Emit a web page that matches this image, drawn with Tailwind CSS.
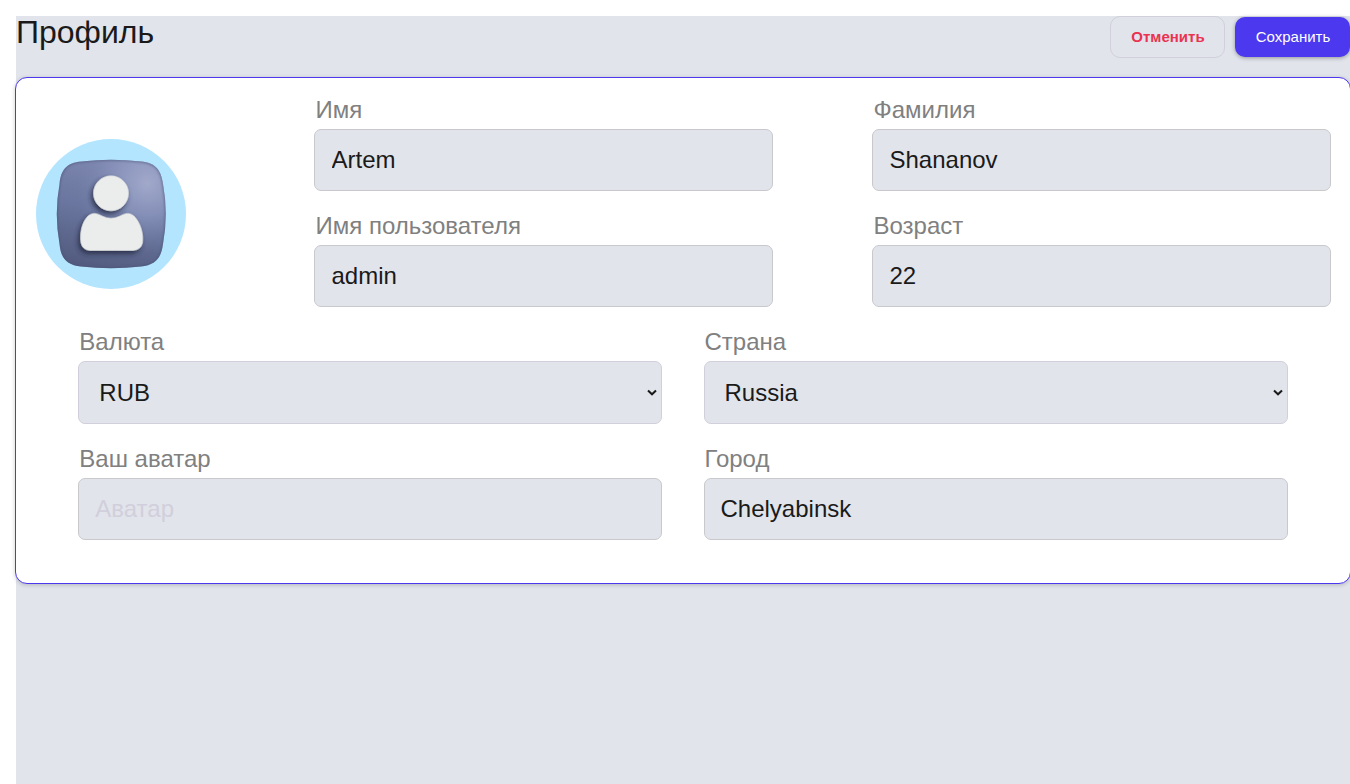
<!DOCTYPE html>
<html lang="ru">
<head>
<meta charset="utf-8">
<title>Профиль</title>
<script src="https://cdn.jsdelivr.net/npm/@tailwindcss/browser@4"></script>
</head>
<body class="h-screen overflow-hidden bg-white pt-4 pl-4 font-['Liberation_Sans',Arial,sans-serif] text-2xl text-[#1a1a1a]">
<main class="h-[768px] bg-[#e1e4eb]">
  <header class="flex h-[61px] items-start justify-between">
    <h1 class="text-[32px] leading-[32px]">Профиль</h1>
    <div class="flex items-center gap-[10px]">
      <button class="h-[42px] w-[115px] rounded-[10px] border border-[#d1cfdb] pl-px text-[15px] font-bold text-[#ea3350]">Отменить</button>
      <button class="h-10 w-[115px] rounded-[10px] bg-[#4b38ef] pl-px text-[15px] text-white shadow-[0_1px_4px_rgba(0,0,0,0.35)]">Сохранить</button>
    </div>
  </header>
  <section class="-ml-px h-[507px] w-[1336px] rounded-[12px] border border-[#4b38ef] bg-white pt-[18px] shadow-[0_1px_4px_rgba(0,0,0,0.2)]">
    <div class="flex pl-5">
      <div class="mt-[43px] mr-32 size-[150px] shrink-0 overflow-hidden rounded-full bg-[#b3e5ff]">
        <svg viewBox="0 0 150 150" class="size-full">
          <defs>
            <linearGradient id="tile" x1="0.65" y1="0" x2="0.4" y2="1">
              <stop offset="0" stop-color="#7f88b0"/><stop offset="0.5" stop-color="#6a769f"/><stop offset="1" stop-color="#535c80"/>
            </linearGradient>
            <radialGradient id="shine" cx="0.83" cy="0.22" r="0.65">
              <stop offset="0" stop-color="#a9b0d0" stop-opacity="0.85"/><stop offset="0.45" stop-color="#959fc6" stop-opacity="0.6"/><stop offset="1" stop-color="#7683ad" stop-opacity="0"/>
            </radialGradient>
            <filter id="shade" x="-30%" y="-30%" width="160%" height="160%">
              <feDropShadow dx="-2" dy="3" stdDeviation="2.5" flood-color="#20263c" flood-opacity="0.8"/>
            </filter>
            <filter id="soft"><feGaussianBlur stdDeviation="0.9"/></filter>
            <clipPath id="clip"><use href="#shape"/></clipPath>
            <path id="shape" d="M45 22.500Q75 19 105 22.500C119 24 125 30 127 45Q132.500 75 127 105C125 120 119 126 105 127.500Q75 131 45 127.500C31 126 25 120 23.500 105Q18 75 23.500 45C25 30 31 24 45 22.500Z"/>
          </defs>
          <use href="#shape" fill="url(#tile)"/>
          <use href="#shape" fill="url(#shine)"/>
          <g clip-path="url(#clip)"><use href="#shape" fill="none" stroke="#4a5476" stroke-opacity="0.6" stroke-width="2" filter="url(#soft)"/></g>
          <g filter="url(#shade)" fill="#ebedec" stroke="#d5d8da" stroke-width="0.6">
            <circle cx="75" cy="54.3" r="17.5"/>
            <path d="M66 77C60 73.500 56 73.500 52 77C46 83 43.500 94 45 104Q46.500 111 54 111.500H97Q105 111 106.500 104C108 94 104 83 98 77C94 73.500 90 73.500 84 77Q75 81.500 66 77Z"/>
          </g>
        </svg>
      </div>
      <div class="grid grid-cols-[459px_459px] gap-x-[99px] gap-y-[21px]">
        <label class="block"><span class="mb-[5px] block pl-[1.5px] leading-7 text-[#808080]">Имя</span><input value="Artem" class="block h-[62px] w-full rounded-[7px] border border-[#c9c9cc] bg-[#e1e4eb] px-[16.5px]"></label>
        <label class="block"><span class="mb-[5px] block pl-[1.5px] leading-7 text-[#808080]">Фамилия</span><input value="Shananov" class="block h-[62px] w-full rounded-[7px] border border-[#c9c9cc] bg-[#e1e4eb] px-[16.5px]"></label>
        <label class="block"><span class="mb-[5px] block pl-[1.5px] leading-7 text-[#808080]">Имя пользователя</span><input value="admin" class="block h-[62px] w-full rounded-[7px] border border-[#c9c9cc] bg-[#e1e4eb] px-[16.5px]"></label>
        <label class="block"><span class="mb-[5px] block pl-[1.5px] leading-7 text-[#808080]">Возраст</span><input value="22" class="block h-[62px] w-full rounded-[7px] border border-[#c9c9cc] bg-[#e1e4eb] px-[16.5px]"></label>
      </div>
    </div>
    <div class="mt-[21px] ml-[62px] grid grid-cols-[583.5px_584px] gap-x-[42px] gap-y-[21px]">
      <label class="relative block"><span class="mb-[5px] block pl-[1.3px] leading-7 text-[#808080]">Валюта</span><select class="block h-[63px] w-full appearance-none rounded-[7px] border border-[#d1cfdb] bg-[#e1e4eb] pl-[20.3px]"><option>RUB</option></select><svg class="pointer-events-none absolute right-[4.5px] bottom-[28px] h-[7px] w-[10px]" viewBox="0 0 10 7" fill="none" stroke="#1a1a1a" stroke-width="2"><path d="M1 1.500L5 5.300L9 1.500"/></svg></label>
      <label class="relative block"><span class="mb-[5px] block pl-[1px] leading-7 text-[#808080]">Страна</span><select class="block h-[63px] w-full appearance-none rounded-[7px] border border-[#d1cfdb] bg-[#e1e4eb] pl-5"><option>Russia</option></select><svg class="pointer-events-none absolute right-[4.5px] bottom-[28px] h-[7px] w-[10px]" viewBox="0 0 10 7" fill="none" stroke="#1a1a1a" stroke-width="2"><path d="M1 1.500L5 5.300L9 1.500"/></svg></label>
      <label class="block"><span class="mb-[5px] block pl-[1.3px] leading-7 text-[#808080]">Ваш аватар</span><input placeholder="Аватар" class="block h-[62px] w-full rounded-[7px] border border-[#c9c9cc] bg-[#e1e4eb] px-[16.3px] placeholder:text-[#d1cfdb]"></label>
      <label class="block"><span class="mb-[5px] block pl-[1px] leading-7 text-[#808080]">Город</span><input value="Chelyabinsk" class="block h-[62px] w-full rounded-[7px] border border-[#c9c9cc] bg-[#e1e4eb] px-4"></label>
    </div>
  </section>
</main>
</body>
</html>
